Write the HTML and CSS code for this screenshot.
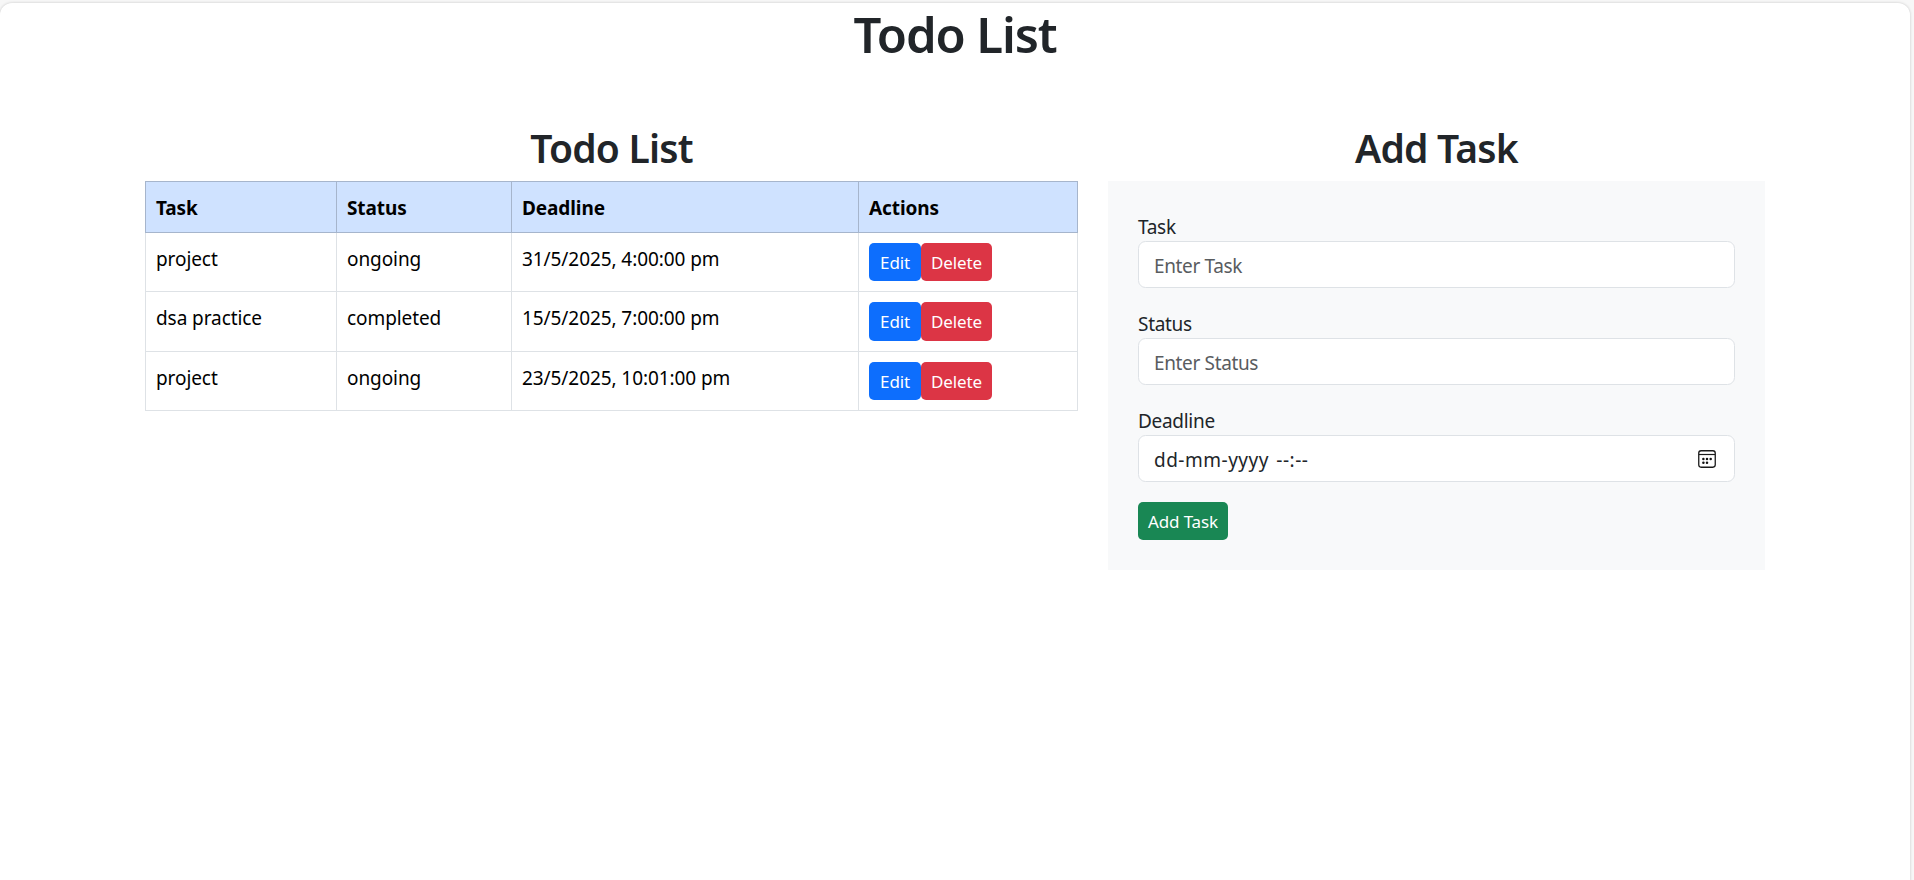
FILE: index.html
```html
<!DOCTYPE html>
<html lang="en">
<head>
<meta charset="utf-8">
<title>Todo List</title>
<link rel="stylesheet" href="styles.css">
</head>
<body>
<main class="panel">
  <h1 class="page-title">Todo List</h1>
  <div class="columns">
    <section class="list">
      <h2 class="section-title">Todo List</h2>
      <table class="table">
        <colgroup><col class="col-task"><col class="col-status"><col class="col-deadline"><col class="col-actions"></colgroup>
        <thead>
          <tr><th>Task</th><th>Status</th><th>Deadline</th><th>Actions</th></tr>
        </thead>
        <tbody>
          <tr class="row"><td>project</td><td>ongoing</td><td>31/5/2025, 4:00:00 pm</td><td class="actions"><div class="buttons"><button class="btn btn-edit">Edit</button><button class="btn btn-delete">Delete</button></div></td></tr>
          <tr class="row row-tall"><td>dsa practice</td><td>completed</td><td>15/5/2025, 7:00:00 pm</td><td class="actions"><div class="buttons"><button class="btn btn-edit">Edit</button><button class="btn btn-delete">Delete</button></div></td></tr>
          <tr class="row"><td>project</td><td>ongoing</td><td>23/5/2025, 10:01:00 pm</td><td class="actions"><div class="buttons"><button class="btn btn-edit">Edit</button><button class="btn btn-delete">Delete</button></div></td></tr>
        </tbody>
      </table>
    </section>
    <section class="add">
      <h2 class="section-title">Add Task</h2>
      <form class="form">
        <div class="field">
          <label class="label" for="task">Task</label>
          <input class="input" id="task" type="text" placeholder="Enter Task">
        </div>
        <div class="field">
          <label class="label" for="status">Status</label>
          <input class="input" id="status" type="text" placeholder="Enter Status">
        </div>
        <div class="field">
          <span class="label">Deadline</span>
          <div class="input date">
            <span class="date-text">dd-mm-yyyy --:--</span>
            <svg class="calendar" width="18" height="18" viewBox="0 0 18 18">
              <rect x="0.75" y="0.75" width="16.5" height="16.5" rx="2.4" fill="none" stroke="#1a1a1a" stroke-width="1.3"/>
              <path d="M1 4.5H17" stroke="#1a1a1a" stroke-width="1.2"/>
              <g fill="#111"><circle cx="5.4" cy="9" r="1.25"/><circle cx="9" cy="9" r="1.25"/><circle cx="12.7" cy="9" r="1.25"/><circle cx="5.4" cy="12.8" r="1.25"/><circle cx="9" cy="12.8" r="1.25"/></g>
            </svg>
          </div>
        </div>
        <button class="btn btn-add" type="button">Add Task</button>
      </form>
    </section>
  </div>
</main>
</body>
</html>
```
FILE: styles.css
```css
* { box-sizing: border-box; }

body {
  margin: 0;
  padding-top: 3px;
  height: 880px;
  overflow: hidden;
  background: #f7f7f7;
  color: #212529;
  font-family: "Noto Sans", "Open Sans", sans-serif;
  font-size: 19px;
  line-height: 30px;
}

.panel {
  width: 1910px;
  height: 890px;
  background: #fff;
  border-radius: 12px;
  box-shadow: 0 0 3px rgba(0, 0, 0, 0.2);
}

.page-title {
  margin: 0;
  height: 60px;
  line-height: 62px;
  font-size: 49px;
  font-weight: 600;
  letter-spacing: -1.1px;
  text-align: center;
}

.columns {
  display: flex;
  gap: 30px;
  padding: 60px 145px 0;
}

.list { width: 933px; }
.add { width: 657px; }

.section-title {
  margin: 0 0 10px;
  height: 48px;
  line-height: 50px;
  font-size: 39px;
  font-weight: 600;
  letter-spacing: -0.8px;
  text-align: center;
}

.table {
  width: 933px;
  table-layout: fixed;
  border-collapse: collapse;
  color: #000;
  letter-spacing: -0.08px;
}

.col-task { width: 191px; }
.col-status { width: 175px; }
.col-deadline { width: 347px; }
.col-actions { width: 219px; }

.table th,
.table td {
  padding: 11px 10px 9px;
  border: 1px solid #dee2e6;
  text-align: left;
  vertical-align: top;
}

.table th {
  background: #cfe2ff;
  border-color: #a6b5cc;
  font-weight: 700;
  letter-spacing: -0.1px;
}

.row { height: 59px; }
.row-tall { height: 60px; }
.table td.actions { padding: 10px 10px 0; }
.buttons { display: flex; }

.btn {
  height: 38px;
  padding: 1px 0 0;
  border: 0;
  border-radius: 5px;
  color: #fff;
  font-family: inherit;
  font-size: 17px;
  letter-spacing: -0.15px;
  line-height: 37px;
  text-align: center;
}

.row-tall .btn { height: 39px; padding-bottom: 1px; }
.btn-edit { width: 52px; background: #0d6efd; }
.btn-delete { width: 71px; background: #dc3545; }
.btn-add { display: block; width: 90px; background: #198754; }

.form {
  padding: 30px;
  background: #f8f9fa;
}

.field { margin-bottom: 20px; }

.label {
  display: block;
  height: 30px;
  line-height: 32px;
  letter-spacing: -0.3px;
}

.input {
  display: block;
  width: 100%;
  height: 47px;
  padding: 2px 15px 0;
  border: 1px solid #dee2e6;
  border-radius: 7.5px;
  background: #fff;
  color: #212529;
  font-family: inherit;
  font-size: 19px;
  letter-spacing: -0.35px;
}

.input::placeholder { color: #595c5f; opacity: 1; }

.date {
  display: flex;
  align-items: center;
  justify-content: space-between;
  padding-right: 18px;
}

.date-text { letter-spacing: 0.5px; word-spacing: 2px; }
.calendar { flex: none; margin-top: -1px; }
```
